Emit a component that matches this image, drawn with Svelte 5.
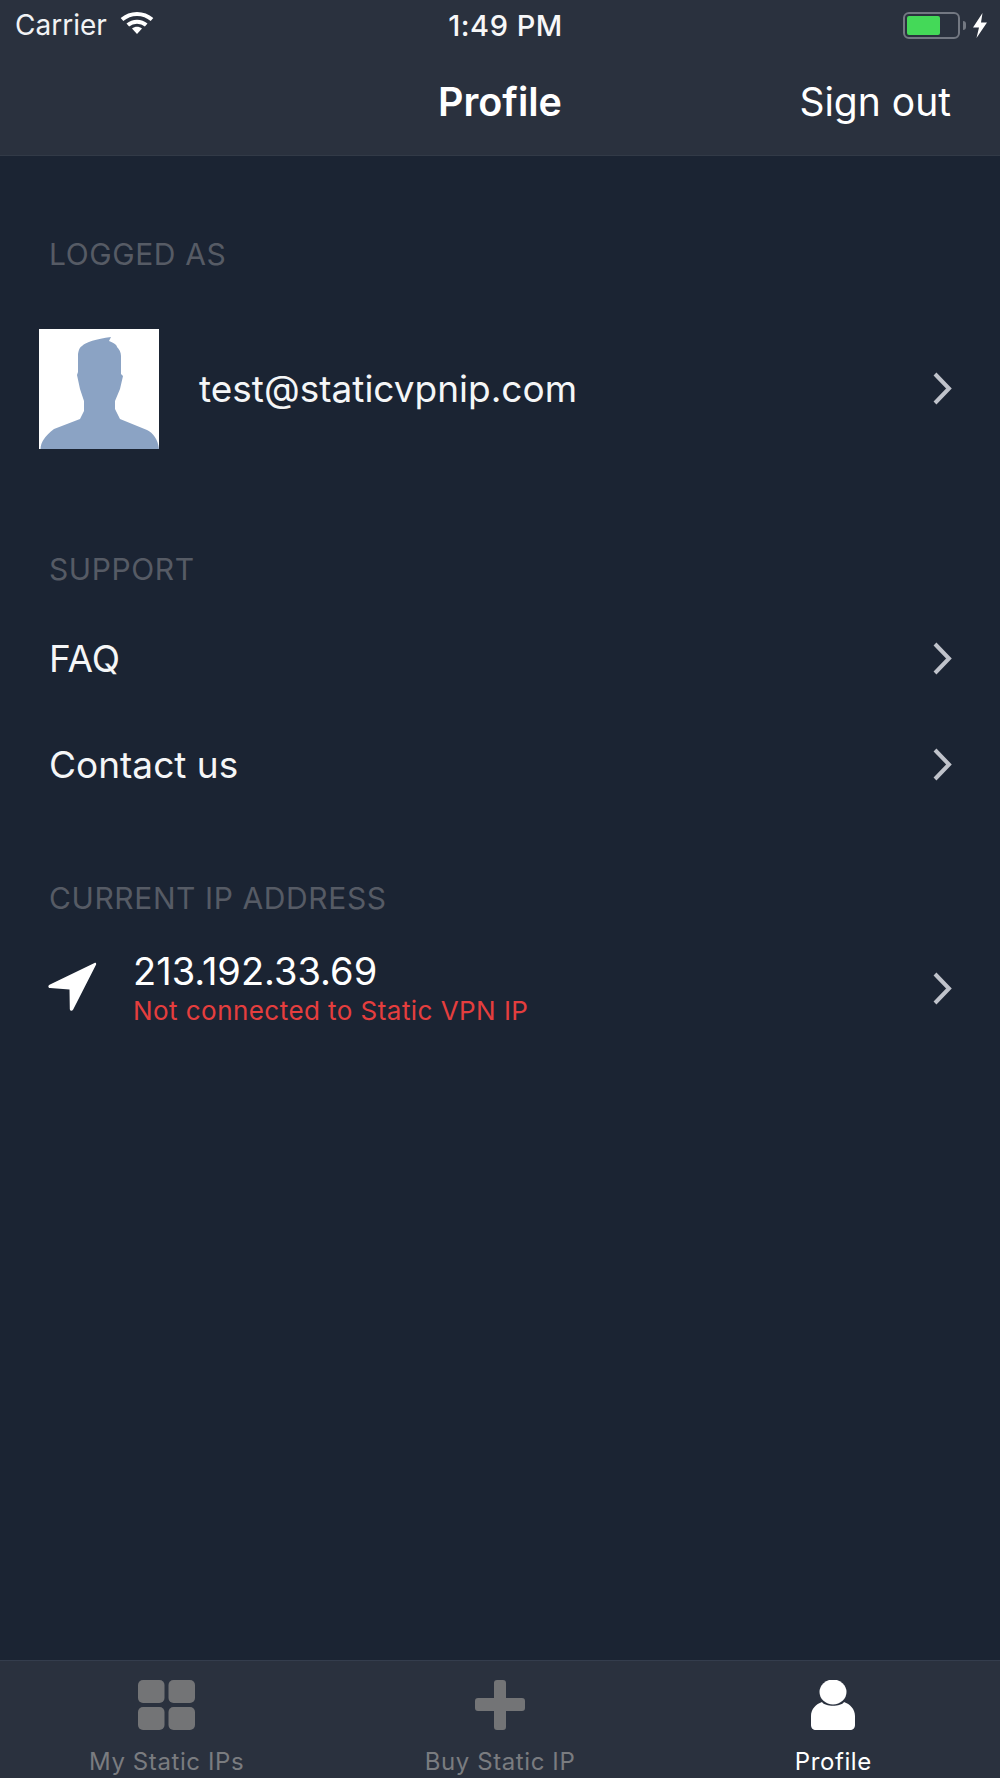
<script>
  const chevron = "M3 3 L17 17.5 L3 32";
</script>

<div class="screen">
  <header class="header">
    <div class="status">
      <div class="status-left">
        <span class="carrier">Carrier</span>
        <svg class="wifi" viewBox="0 0 34 24" aria-hidden="true">
          <path class="wifi-arc" d="M2 8.500 C10.500 1 23.500 1 32 8.500" />
          <path class="wifi-arc" d="M7.800 14 C13 9.500 21 9.500 26.200 14" />
          <path class="wifi-dot" d="M12 17.500 C15 15 19 15 22 17.500 L17 23 Z" />
        </svg>
      </div>
      <span class="time">1:49 PM</span>
      <div class="status-right">
        <div class="battery"><div class="battery-fill"></div></div>
        <div class="battery-nub"></div>
        <svg class="bolt" viewBox="0 0 14 25" aria-hidden="true">
          <path d="M9.500 0 L0 14.500 L6 14.500 L3.500 25 L14 9.500 L8 9.500 Z" />
        </svg>
      </div>
    </div>
    <div class="nav">
      <span class="nav-title">Profile</span>
      <span class="sign-out">Sign out</span>
    </div>
  </header>

  <main class="main">
    <section class="section-logged">
      <div class="label">LOGGED AS</div>
      <div class="row row-avatar">
        <div class="avatar">
          <svg viewBox="0 0 120 120" aria-hidden="true">
            <path d="M1.500 120 C2 113 5 108 15 100 L41 90 L45 82 L45 72 L41 60 L38 46 L39 43 L39 25 C40 20 41 18 43 17 C47 13 57 10 72 8 L70 12 C75 14 78 16 78 18 C80 20 82 23 82 27 L82 45 L84 47 L81 60 L76 72 L76 80 L81 90 L108 101 C114 104 119 110 120 120 Z" />
          </svg>
        </div>
        <span class="row-text">test@staticvpnip.com</span>
        <svg class="chevron" viewBox="0 0 20 35" aria-hidden="true"><path d={chevron} /></svg>
      </div>
    </section>

    <section class="section-support">
      <div class="label">SUPPORT</div>
      <div class="row row-link">
        <span class="row-text">FAQ</span>
        <svg class="chevron" viewBox="0 0 20 35" aria-hidden="true"><path d={chevron} /></svg>
      </div>
      <div class="row row-link">
        <span class="row-text">Contact us</span>
        <svg class="chevron" viewBox="0 0 20 35" aria-hidden="true"><path d={chevron} /></svg>
      </div>
    </section>

    <section class="section-ip">
      <div class="label">CURRENT IP ADDRESS</div>
      <div class="row row-ip">
        <svg class="arrow" viewBox="0 0 50 50" aria-hidden="true">
          <path d="M46.500 1 C47.800 .5 48.500 1.500 48 2.800 L25.200 47.500 C24 49.500 22 49 21.800 47 L21.500 27.500 L2 26 C0 25.800 -.2 23.500 1.500 22.800 Z" />
        </svg>
        <div class="ip-text">
          <div class="ip">213.192.33.69</div>
          <div class="ip-status">Not connected to Static VPN IP</div>
        </div>
        <svg class="chevron" viewBox="0 0 20 35" aria-hidden="true"><path d={chevron} /></svg>
      </div>
    </section>
  </main>

  <nav class="tabs">
    <div class="tab">
      <svg class="tab-icon" width="57" height="50" viewBox="0 0 57 50" aria-hidden="true">
        <rect x="0" y="0" width="26.500" height="23" rx="5" />
        <rect x="30.500" y="0" width="26.500" height="23" rx="5" />
        <rect x="0" y="27" width="26.500" height="23" rx="5" />
        <rect x="30.500" y="27" width="26.500" height="23" rx="5" />
      </svg>
      <span class="tab-label">My Static IPs</span>
    </div>
    <div class="tab">
      <svg class="tab-icon" width="50" height="50" viewBox="0 0 50 50" aria-hidden="true">
        <path d="M19 3 a3 3 0 0 1 3 -3 h6 a3 3 0 0 1 3 3 V18 H47 a3 3 0 0 1 3 3 v7 a3 3 0 0 1 -3 3 H31 V47 a3 3 0 0 1 -3 3 h-6 a3 3 0 0 1 -3 -3 V31 H3 a3 3 0 0 1 -3 -3 v-7 a3 3 0 0 1 3 -3 H19 Z" />
      </svg>
      <span class="tab-label">Buy Static IP</span>
    </div>
    <div class="tab active">
      <svg class="tab-icon" width="44" height="50" viewBox="0 0 44 50" aria-hidden="true">
        <ellipse cx="22" cy="12" rx="13.500" ry="12.500" />
        <path d="M11 22 C14 27 30 27 33 22 C39 24 44 29 44 36 L44 45 C44 48 42 50 39 50 L5 50 C2 50 0 48 0 45 L0 36 C0 29 5 24 11 22 Z" />
      </svg>
      <span class="tab-label">Profile</span>
    </div>
  </nav>
</div>

<style>
  :global(body) {
    margin: 0;
    background: #1b2433;
  }

  .screen {
    width: 1000px;
    height: 1778px;
    display: flex;
    flex-direction: column;
    overflow: hidden;
    background: #1b2433;
    color: #fff;
    font-family: Inter, "Liberation Sans", sans-serif;
  }

  .header {
    height: 155px;
    flex: none;
    background: #2a313e;
    border-bottom: 1px solid #323a47;
  }

  .status {
    height: 50px;
    display: grid;
    grid-template-columns: 1fr auto 1fr;
    align-items: center;
    padding: 0 13px 0 15px;
  }

  .status-left {
    display: flex;
    align-items: center;
    gap: 13px;
  }

  .carrier {
    font-size: 28px;
    color: #f2f3f5;
  }

  .wifi {
    width: 34px;
    height: 24px;
    margin-top: -5px;
  }

  .wifi-arc {
    fill: none;
    stroke: #fff;
    stroke-width: 4;
  }

  .wifi-dot {
    fill: #fff;
  }

  .time {
    margin-left: 9px;
    font-size: 29px;
    font-weight: 500;
    letter-spacing: 0.5px;
    color: #f7f7f8;
  }

  .status-right {
    display: flex;
    align-items: center;
    justify-content: flex-end;
  }

  .battery {
    width: 57px;
    height: 27px;
    box-sizing: border-box;
    border: 2.500px solid #737882;
    border-radius: 6px;
    padding: 2px;
  }

  .battery-fill {
    width: 33px;
    height: 100%;
    background: #44d958;
    border-radius: 2px;
  }

  .battery-nub {
    width: 3px;
    height: 9px;
    margin-left: 3px;
    background: #737882;
    border-radius: 0 3px 3px 0;
  }

  .bolt {
    width: 14px;
    height: 25px;
    margin-left: 7px;
    fill: #fff;
  }

  .nav {
    height: 104px;
    display: flex;
    align-items: center;
    justify-content: center;
    position: relative;
  }

  .nav-title {
    font-size: 39.500px;
    font-weight: 600;
  }

  .sign-out {
    position: absolute;
    right: 49px;
    top: calc(50% - 1px);
    transform: translateY(-50%);
    font-size: 39px;
  }

  .main {
    flex: 1;
    padding-top: 79px;
  }

  .label {
    height: 40px;
    line-height: 38px;
    padding-left: 49px;
    font-size: 30px;
    letter-spacing: 0.6px;
    color: #565b65;
  }

  .row {
    display: flex;
    align-items: center;
    padding-right: 48px;
  }

  .row-text {
    flex: 1;
    font-size: 37px;
    color: #f5f6f7;
  }

  .row-avatar {
    margin-top: 54px;
    padding-left: 39px;
    gap: 40px;
  }

  .row-avatar .row-text,
  .row-avatar .chevron {
    margin-top: -2px;
  }

  .avatar {
    width: 120px;
    height: 120px;
    flex: none;
    background: #fff;
  }

  .avatar svg {
    display: block;
    width: 120px;
    height: 120px;
    fill: #8ba3c4;
  }

  .section-support {
    margin-top: 101px;
  }

  .section-support .label {
    margin-bottom: 15px;
  }

  .row-link {
    height: 106px;
    padding-left: 49px;
  }

  .section-ip {
    margin-top: 62px;
  }

  .row-ip {
    height: 80px;
    margin-top: 29px;
    padding-left: 48px;
    gap: 35px;
  }

  .arrow {
    width: 50px;
    height: 50px;
    flex: none;
    margin-top: -3px;
    fill: #fff;
  }

  .ip-text {
    flex: 1;
  }

  .ip {
    font-size: 38px;
    line-height: 44px;
  }

  .ip-status {
    font-size: 26px;
    line-height: 35px;
    letter-spacing: 0.45px;
    color: #e53e3e;
  }

  .chevron {
    width: 20px;
    height: 35px;
    flex: none;
    fill: none;
    stroke: #c0c3cb;
    stroke-width: 4;
  }

  .tabs {
    height: 118px;
    flex: none;
    box-sizing: border-box;
    display: grid;
    grid-template-columns: repeat(3, 1fr);
    background: #2a313e;
    border-top: 1px solid #343d4d;
  }

  .tab {
    display: flex;
    flex-direction: column;
    align-items: center;
    padding-top: 19px;
    color: #7a7c80;
  }

  .tab.active {
    color: #fff;
  }

  .tab-icon {
    display: block;
    fill: #737476;
  }

  .active .tab-icon {
    fill: #fff;
  }

  .tab-label {
    margin-top: 17px;
    font-size: 24px;
    line-height: 30px;
    letter-spacing: 0.6px;
  }
</style>
